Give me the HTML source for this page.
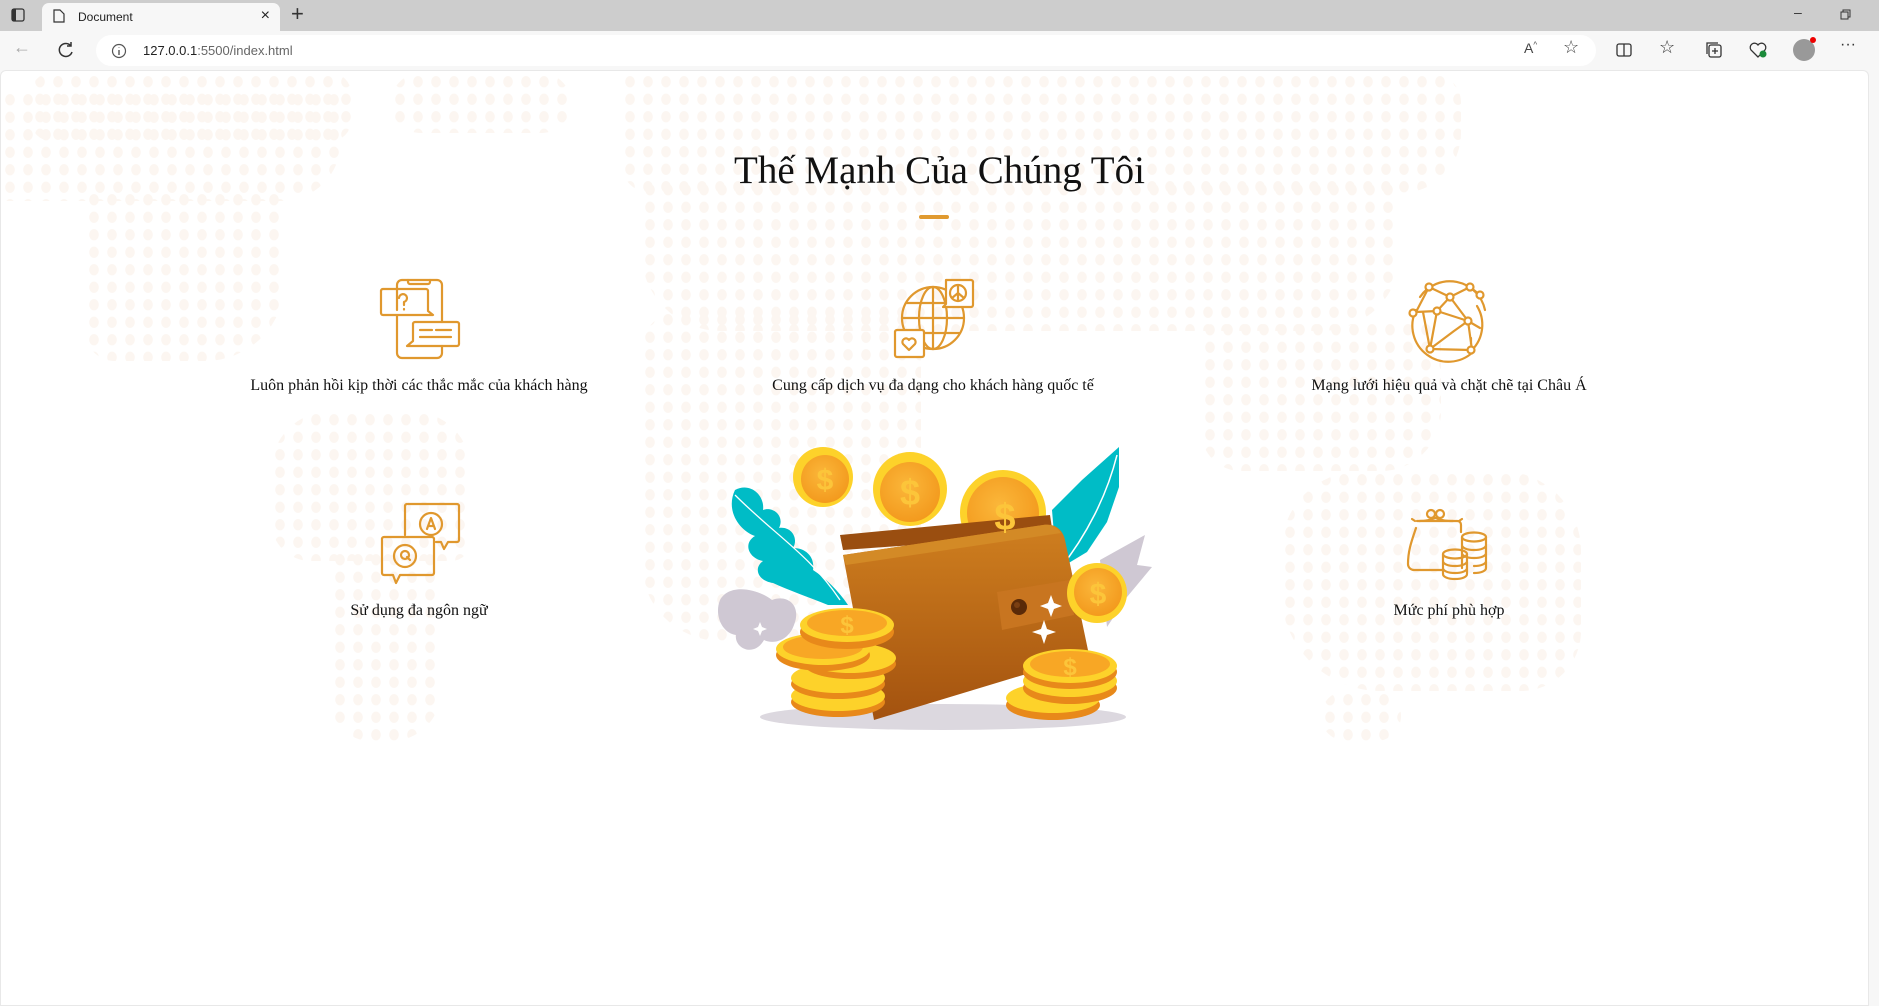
<!DOCTYPE html>
<html><head><meta charset="utf-8">
<style>
*{margin:0;padding:0;box-sizing:border-box}
body{width:1879px;height:1006px;overflow:hidden;background:#f7f7f7;font-family:"Liberation Serif",serif;position:relative}
.tabbar{position:absolute;left:0;top:0;width:1879px;height:31px;background:#cdcdcd}
.tab{position:absolute;left:42px;top:3px;width:238px;height:28px;background:#f7f7f7;border-radius:7px 7px 0 0;font:12px "Liberation Sans",sans-serif;color:#222}
.addr{position:absolute;left:0;top:31px;width:1879px;height:39px;background:#f7f7f7}
.url{position:absolute;left:96px;top:4px;width:1500px;height:31px;background:#fff;border-radius:16px;font:13px "Liberation Sans",sans-serif;color:#222}
.page{position:absolute;left:0;top:70px;width:1869px;height:936px;background:#fff;border-radius:6px 6px 0 0;border:1px solid #e8e8e8;overflow:hidden}
.dots{position:absolute;background-image:radial-gradient(ellipse 5px 6px,#fcf6f1 90%,transparent 100%);background-size:18px 17.5px}
.title{position:absolute;left:0;width:1879px;top:148px;text-align:center;font-size:39px;color:#111}
.bar{position:absolute;left:919px;top:215px;width:30px;height:4px;background:#e09a30;border-radius:2px}
.lbl{position:absolute;width:500px;text-align:center;font-size:16px;color:#111}
svg.ic{position:absolute;fill:none;stroke:#e0982e;stroke-width:2.2;stroke-linecap:round;stroke-linejoin:round}
</style></head><body>
<div class="tabbar">
 <svg style="position:absolute;left:11px;top:8px" width="14" height="14"><rect x="1" y="1" width="12" height="12" rx="2" fill="none" stroke="#333" stroke-width="1.3"/><rect x="1" y="1" width="4" height="12" fill="#333"/></svg>
 <div class="tab"><svg style="position:absolute;left:11px;top:6px" width="12" height="14"><path d="M1 1h6l4 4v8H1z" fill="none" stroke="#333" stroke-width="1.2"/></svg><span style="position:absolute;left:36px;top:7px">Document</span><span style="position:absolute;right:10px;top:4px;font-size:16px">×</span></div>
 <span style="position:absolute;left:291px;top:1px;font:22px 'Liberation Sans',sans-serif;color:#333">+</span>
 <span style="position:absolute;left:1794px;top:4px;font:14px 'Liberation Sans';color:#333">–</span>
 <svg style="position:absolute;left:1840px;top:9px" width="11" height="11"><rect x="1" y="3" width="7" height="7" fill="none" stroke="#333"/><path d="M3 3V1h7v7H8" fill="none" stroke="#333"/></svg>
</div>
<div class="addr">
 <span style="position:absolute;left:13px;top:6px;font:18px 'Liberation Sans';color:#aaa">←</span>
 <svg style="position:absolute;left:57px;top:10px" width="18" height="18"><path d="M14 5A6.5 6.5 0 1 0 15 11" fill="none" stroke="#333" stroke-width="1.5"/><path d="M14 1v4h-4" fill="none" stroke="#333" stroke-width="1.5"/></svg>
 <div class="url"><svg style="position:absolute;left:15px;top:8px" width="16" height="16"><circle cx="8" cy="8" r="6.5" fill="none" stroke="#555" stroke-width="1.2"/><path d="M8 7v5M8 4.5v.5" stroke="#555" stroke-width="1.4"/></svg><span style="position:absolute;left:47px;top:8px">127.0.0.1<span style="color:#666">:5500/index.html</span></span></div>
 <span style="position:absolute;left:1524px;top:9px;font:14px 'Liberation Sans';color:#444">A<sup style="font-size:8px">^</sup></span>
 <span style="position:absolute;left:1563px;top:6px;font:18px 'Liberation Sans';color:#444">☆</span>
 <svg style="position:absolute;left:1616px;top:11px" width="16" height="16"><rect x="1" y="2" width="14" height="12" rx="2" fill="none" stroke="#333" stroke-width="1.3"/><path d="M8 2v12" stroke="#333" stroke-width="1.3"/></svg>
 <span style="position:absolute;left:1659px;top:6px;font:18px 'Liberation Sans';color:#333">☆</span>
 <svg style="position:absolute;left:1706px;top:11px" width="16" height="16"><rect x="3" y="3" width="12" height="12" rx="2" fill="none" stroke="#333" stroke-width="1.3"/><path d="M1 12V1h11" fill="none" stroke="#333" stroke-width="1.3"/><path d="M9 6v6M6 9h6" stroke="#333" stroke-width="1.3"/></svg>
 <svg style="position:absolute;left:1749px;top:11px" width="18" height="16"><path d="M9 15L2 8a4 4 0 0 1 7-5 4 4 0 0 1 7 5z" fill="none" stroke="#333" stroke-width="1.3"/><circle cx="14" cy="12" r="3.5" fill="#1a8a3a"/></svg>
 <div style="position:absolute;left:1793px;top:8px;width:22px;height:22px;border-radius:50%;background:#999"></div>
 <div style="position:absolute;left:1810px;top:6px;width:6px;height:6px;border-radius:50%;background:#e00"></div>
 <span style="position:absolute;left:1840px;top:5px;font:16px 'Liberation Sans';color:#333">···</span>
</div>
<div class="page">
 <div class="dots" style="left:30px;top:2px;width:320px;height:68px;border-radius:20px"></div>
 <div class="dots" style="left:0;top:20px;width:340px;height:110px;border-radius:0 0 60px 0"></div>
 <div class="dots" style="left:84px;top:120px;width:200px;height:170px;border-radius:0 0 80px 30px"></div>
 <div class="dots" style="left:390px;top:2px;width:180px;height:60px;border-radius:30px"></div>
 <div class="dots" style="left:270px;top:340px;width:200px;height:150px;border-radius:60px 60px 20px 40px"></div>
 <div class="dots" style="left:330px;top:480px;width:110px;height:190px;border-radius:0 0 50px 40px"></div>
 <div class="dots" style="left:620px;top:2px;width:840px;height:120px;border-radius:10px 30px 60px 30px"></div>
 <div class="dots" style="left:640px;top:110px;width:760px;height:150px;border-radius:0 0 80px 80px"></div>
 <div class="dots" style="left:640px;top:240px;width:280px;height:330px;border-radius:40px 40px 120px 80px"></div>
 <div class="dots" style="left:1200px;top:250px;width:240px;height:150px;border-radius:20px 20px 60px 40px"></div>
 <div class="dots" style="left:1280px;top:400px;width:300px;height:220px;border-radius:80px 80px 60px 100px"></div>
 <div class="dots" style="left:1320px;top:620px;width:80px;height:50px;border-radius:30px"></div>
</div>
<div class="title">Thế Mạnh Của Chúng Tôi</div>
<div class="bar"></div>

<svg class="ic" style="left:370px;top:270px" width="110" height="95" viewBox="0 0 110 95">
 <path d="M27 40V15a5 5 0 0 1 5-5h35a5 5 0 0 1 5 5v37"/><path d="M38 10v2a2 2 0 0 0 2 2h18a2 2 0 0 0 2-2v-2"/>
 <path d="M27 46v37a5 5 0 0 0 5 5h35a5 5 0 0 0 5-5v-7"/>
 <path d="M13 19h43a2 2 0 0 1 2 2v20l5 4H13a2 2 0 0 1-2-2V21a2 2 0 0 1 2-2z"/>
 <path d="M29 28a4 4 0 1 1 5 4v3M34 39v.5"/>
 <path d="M45 52h42a2 2 0 0 1 2 2v20a2 2 0 0 1-2 2H37l6-5V54a2 2 0 0 1 2-2z"/>
 <path d="M50 60h12M66 60h15M50 67h31"/>
</svg>
<svg class="ic" style="left:885px;top:270px" width="110" height="95" viewBox="0 0 110 95">
 <circle cx="48" cy="48" r="31"/>
 <path d="M17 48h62M48 17v62M22 33h52M22 63h52"/>
 <ellipse cx="48" cy="48" rx="14" ry="31"/>
 <path d="M61 10h25a2 2 0 0 1 2 2v23a2 2 0 0 1-2 2H58l3-3z" fill="#fff"/>
 <circle cx="73" cy="23" r="8"/><path d="M73 15v16M73 23l-6 5M73 23l6 5"/>
 <path d="M12 60h25a2 2 0 0 1 2 2v23a2 2 0 0 1-2 2H12a2 2 0 0 1-2-2V62a2 2 0 0 1 2-2z" fill="#fff"/>
 <path d="M24 80l-6-6a3.5 3.5 0 0 1 6-4a3.5 3.5 0 0 1 6 4z"/>
</svg>
<svg class="ic" style="left:1395px;top:270px" width="110" height="95" viewBox="0 0 110 95">
 <path d="M25 27A36 36 0 0 1 90 40M21 40A36 36 0 0 0 78 82M82 36a36 36 0 0 1-5 44"/>
 <path d="M34 17l21 10l20-10l10 8M34 17l-13 25l21-1l13-14l18 24l12 7M42 41l31 10l-14 10l-24 18l-7-37M55 27l18 24M73 51l4 29M35 79l41 1M42 41l-7 38M76 68v6"/>
 <g fill="#fff"><circle cx="34" cy="17" r="3.5"/><circle cx="75" cy="17" r="3.5"/><circle cx="55" cy="27" r="3.5"/><circle cx="85" cy="25" r="3.5"/><circle cx="18" cy="43" r="3.5"/><circle cx="42" cy="41" r="3.5"/><circle cx="73" cy="51" r="3.5"/><circle cx="35" cy="79" r="3.5"/><circle cx="76" cy="80" r="3.5"/></g>
</svg>
<svg class="ic" style="left:370px;top:495px" width="110" height="95" viewBox="0 0 110 95">
 <path d="M38 9h49a2 2 0 0 1 2 2v34a2 2 0 0 1-2 2H78l-4 7l-3-7H66"/><path d="M35 40V11a2 2 0 0 1 2-2"/>
 <circle cx="61" cy="29" r="11"/><path d="M57 34l4-11l4 11M58.5 31h5"/>
 <path d="M14 42h48a2 2 0 0 1 2 2v34a2 2 0 0 1-2 2H30l-4 8l-3-8h-9a2 2 0 0 1-2-2V44a2 2 0 0 1 2-2z"/>
 <circle cx="35" cy="61" r="11"/><circle cx="35" cy="60" r="4"/><path d="M37 62l3 3"/>
</svg>
<svg class="ic" style="left:1395px;top:495px" width="110" height="95" viewBox="0 0 110 95">
 <path d="M21 33c-4 12-8 22-8 36a6 6 0 0 0 6 6h29M22 26h40c3 0 4 2 4 4v7"/><path d="M20 26l-3-2M64 26l3-2"/>
 <circle cx="36" cy="19" r="4"/><circle cx="45" cy="19" r="4"/><path d="M40 23c-6 3-12 3-16 3M41 23c6 3 12 3 17 3"/>
 <ellipse cx="79" cy="42" rx="12" ry="4.5"/><path d="M67 42v31M91 42v31c0 3-5 5-12 5M67 50c0 3 5 5 12 5s12-2 12-5M67 58c0 3 5 5 12 5s12-2 12-5M91 66c0 3-5 5-12 5"/>
 <ellipse cx="60" cy="59" rx="12" ry="4.5"/><path d="M48 59v20c0 3 5 5 12 5s12-2 12-5V59M48 66c0 3 5 5 12 5s12-2 12-5M48 73c0 3 5 5 12 5s12-2 12-5"/>
</svg>

<div class="lbl" style="left:169px;top:377px">Luôn phản hồi kịp thời các thắc mắc của khách hàng</div>
<div class="lbl" style="left:683px;top:377px">Cung cấp dịch vụ đa dạng cho khách hàng quốc tế</div>
<div class="lbl" style="left:1199px;top:377px">Mạng lưới hiệu quả và chặt chẽ tại Châu Á</div>
<div class="lbl" style="left:169px;top:602px">Sử dụng đa ngôn ngữ</div>
<div class="lbl" style="left:1199px;top:602px">Mức phí phù hợp</div>

<svg style="position:absolute;left:0;top:0" width="1879" height="1006">
 <defs>
  <linearGradient id="wg" x1="0" y1="0" x2="0" y2="1"><stop offset="0" stop-color="#cf7f1f"/><stop offset="1" stop-color="#a3520f"/></linearGradient>
  <radialGradient id="cg" cx=".45" cy=".4" r=".6"><stop offset="0" stop-color="#fbb73a"/><stop offset="1" stop-color="#f39a1e"/></radialGradient>
 </defs>
 <ellipse cx="943" cy="717" rx="183" ry="13" fill="#dcd8df"/>
 <path d="M720 600c10-18 40-10 52 0c15-6 30 5 22 25c-5 15-20 20-30 15c-10 18-30 8-28-5c-14-2-22-20-16-35z" fill="#cfc8d3"/>
 <path d="M1100 560l45-25l-8 30l15 2l-25 30l-20 30z" fill="#cfc8d3"/>
 <path d="M735 490c15-8 30 5 28 20c10-4 22 6 16 18c12-2 20 10 14 20c14 0 22 10 20 22c12 8 25 20 35 35l-20 0c-20-8-40-15-55-22c-15-2-20-15-10-22c-15-3-20-18-8-25c-15-5-30-25-20-46z" fill="#00bcc6"/>
 <path d="M735 495c40 40 75 60 105 105" stroke="#fff" stroke-width="1.3" fill="none"/>
 <path d="M1119 447l0 40l-12 35l-20 30l-30 18l-5-60l30-30z" fill="#00bcc6"/>
 <path d="M1117 455c-10 40-30 80-58 115" stroke="#fff" stroke-width="1.5" fill="none"/>
 <circle cx="1003" cy="513" r="43" fill="#fdd22a"/><circle cx="1003" cy="513" r="36" fill="url(#cg)"/>
 <path d="M840 535l210-20l3 20l-210 15z" fill="#9a4e10"/>
 <path d="M843 555l200-30c12-2 20 5 22 15l24 115l-215 65z" fill="url(#wg)"/>
 <path d="M843 555l200-30c8-1 14 2 18 8l-215 32z" fill="#d38a26"/>
 <path d="M997 592l73-12l4 35l-72 15z" fill="#c87520"/>
 <circle cx="1019" cy="607" r="8" fill="#5a2a08"/><circle cx="1017" cy="605" r="3" fill="#7a3f12"/>
 <path d="M1051 595l3 8l8 3l-8 3l-3 8l-3-8l-8-3l8-3z" fill="#fff"/>
 <path d="M1044 620l3 9l9 3l-9 3l-3 9l-3-9l-9-3l9-3z" fill="#fff"/>
 <path d="M760 622l2 5l5 2l-5 2l-2 5l-2-5l-5-2l5-2z" fill="#fff"/>
 <g>
  <circle cx="823" cy="477" r="30" fill="#fdd22a"/><circle cx="825" cy="479" r="24" fill="url(#cg)"/>
  <text x="825" y="490" font-size="30" font-family="Liberation Sans" font-weight="bold" fill="#fcc53a" text-anchor="middle">$</text>
  <circle cx="910" cy="489" r="37" fill="#fdd22a"/><circle cx="910" cy="492" r="30" fill="url(#cg)"/>
  <text x="910" y="505" font-size="36" font-family="Liberation Sans" font-weight="bold" fill="#fcc53a" text-anchor="middle">$</text>
  <text x="1005" y="530" font-size="38" font-family="Liberation Sans" font-weight="bold" fill="#fcc53a" text-anchor="middle">$</text>
  <circle cx="1097" cy="593" r="30" fill="#fdd22a"/><circle cx="1098" cy="592" r="24" fill="url(#cg)"/>
  <text x="1098" y="604" font-size="30" font-family="Liberation Sans" font-weight="bold" fill="#fcc53a" text-anchor="middle">$</text>
 </g>
 <g>
  <ellipse cx="838" cy="702" rx="47" ry="15" fill="#e8891a"/><ellipse cx="838" cy="696" rx="47" ry="15" fill="#fdd22a"/>
  <ellipse cx="838" cy="684" rx="47" ry="15" fill="#e8891a"/><ellipse cx="838" cy="678" rx="47" ry="15" fill="#fdd22a"/>
  <ellipse cx="850" cy="664" rx="46" ry="15" fill="#e8891a"/><ellipse cx="850" cy="658" rx="46" ry="15" fill="#fdd22a"/>
  <ellipse cx="823" cy="655" rx="47" ry="16" fill="#e8891a"/><ellipse cx="823" cy="649" rx="47" ry="16" fill="#fdd22a"/><ellipse cx="823" cy="647" rx="40" ry="12" fill="#f8a725"/>
  <ellipse cx="847" cy="632" rx="47" ry="17" fill="#e8891a"/><ellipse cx="847" cy="625" rx="47" ry="17" fill="#fdd22a"/><ellipse cx="847" cy="623" rx="40" ry="13" fill="#f8a725"/>
  <text x="847" y="633" font-size="24" font-family="Liberation Sans" font-weight="bold" fill="#fcc53a" text-anchor="middle">$</text>
 </g>
 <ellipse cx="1053" cy="705" rx="47" ry="15" fill="#e8891a"/><ellipse cx="1053" cy="698" rx="47" ry="15" fill="#fdd22a"/>
 <ellipse cx="1070" cy="688" rx="47" ry="16" fill="#e8891a"/><ellipse cx="1070" cy="681" rx="47" ry="16" fill="#fdd22a"/>
 <ellipse cx="1070" cy="672" rx="47" ry="17" fill="#e8891a"/><ellipse cx="1070" cy="666" rx="47" ry="17" fill="#fdd22a"/><ellipse cx="1070" cy="664" rx="40" ry="13" fill="#f8a725"/>
 <text x="1070" y="675" font-size="24" font-family="Liberation Sans" font-weight="bold" fill="#fcc53a" text-anchor="middle">$</text>
</svg>
</body></html>
